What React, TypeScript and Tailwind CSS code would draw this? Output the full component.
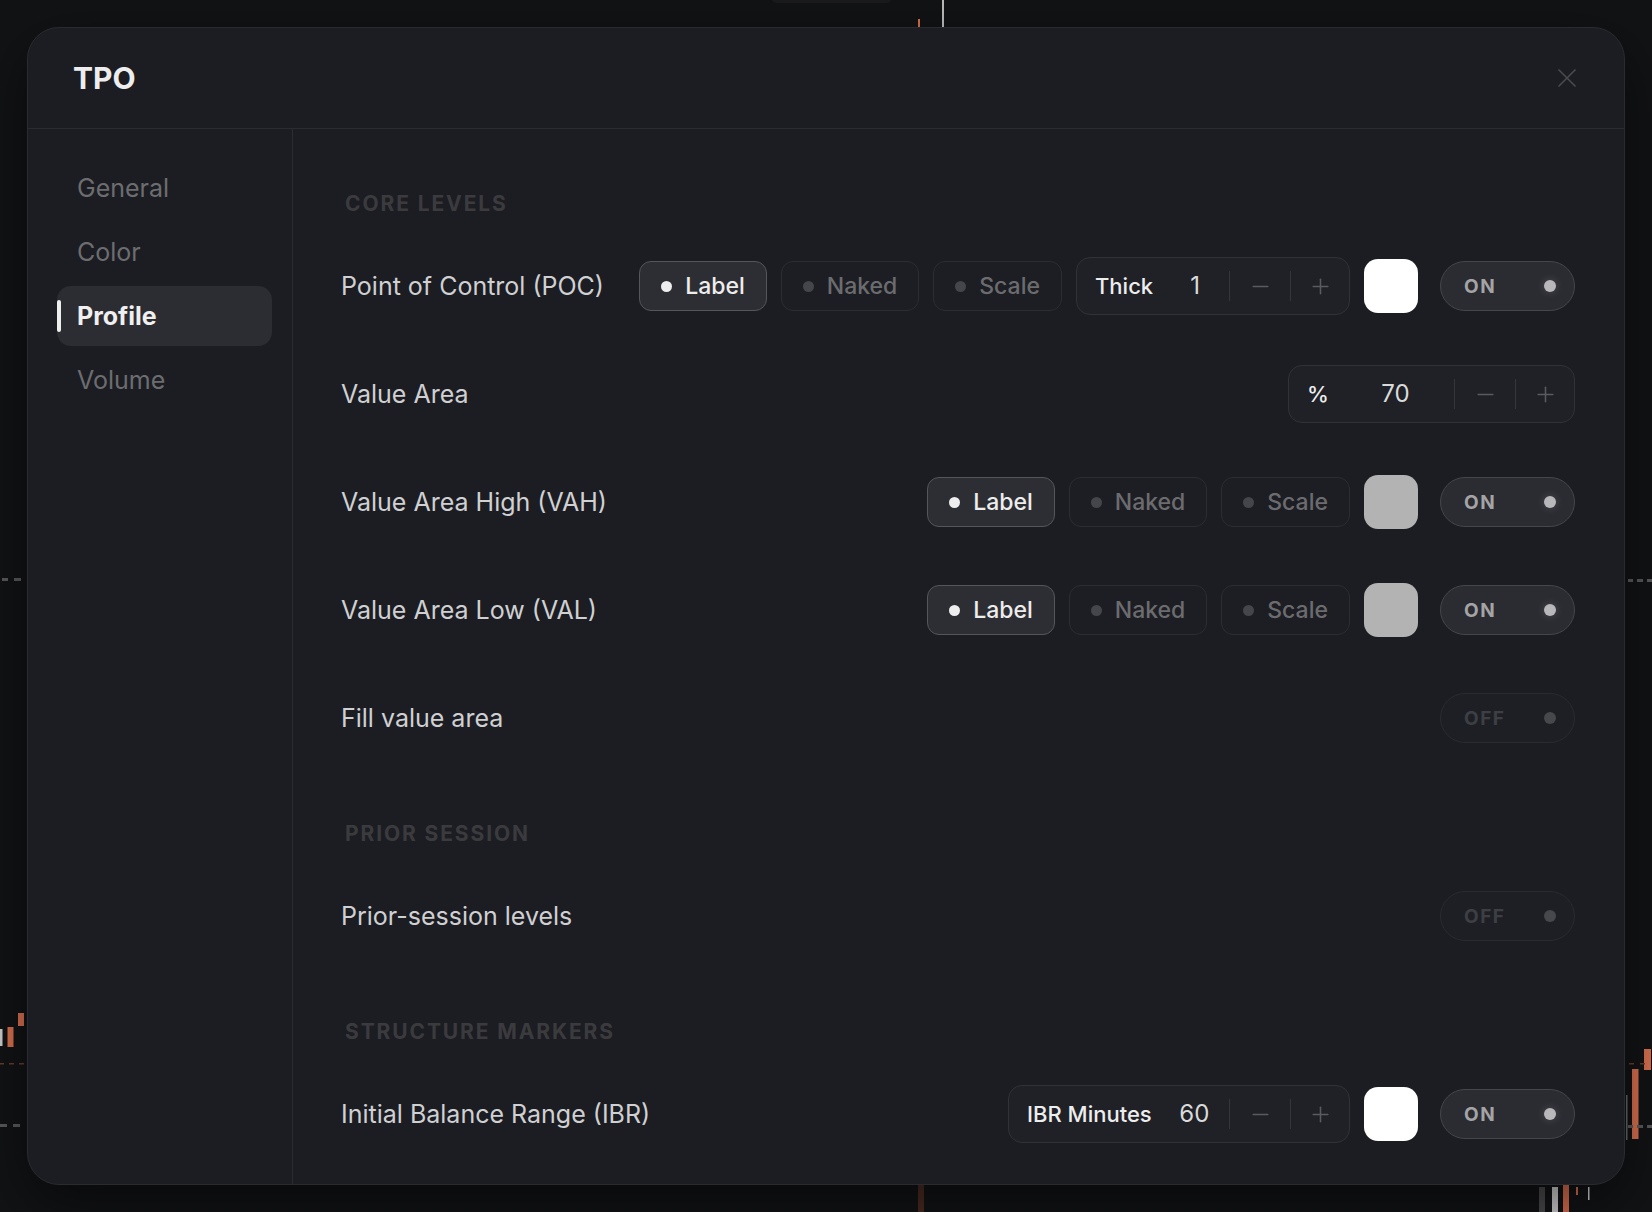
import React from "react";
import { Minus, Plus, X } from "lucide-react";

const FONT = { fontFamily: "Inter, 'Noto Sans', sans-serif" };

function cx(...a: (string | false | undefined)[]) {
  return a.filter(Boolean).join(" ");
}

function Chip({ label, active }: { label: string; active?: boolean }) {
  return (
    <div
      className={cx(
        "flex h-[50px] items-center gap-[13px] rounded-[12px] border pl-[21px] pr-[21px]",
        active
          ? "border-[#55565c] bg-[#2d2e33] text-[#ededed]"
          : "border-[#2c2d33] bg-[#1c1e24] text-[#6c6c6f]"
      )}
    >
      <span
        className={cx(
          "h-[11px] w-[11px] rounded-full",
          active ? "bg-[#eeeeee]" : "bg-[#45464b]"
        )}
      />
      <span className="text-[23px] font-medium leading-none">{label}</span>
    </div>
  );
}

function Stepper({
  label,
  value,
  widthClass,
}: {
  label: string;
  value: string;
  widthClass: string;
}) {
  return (
    <div
      className={cx(
        "flex h-[58px] items-center rounded-[14px] border border-[#313238] bg-[#1f2127] pl-[18px]",
        widthClass
      )}
    >
      <span className="text-[22px] font-medium leading-none text-[#ededed]">{label}</span>
      <span className="flex-1 pl-2 text-center text-[24px] leading-none text-[#dadada]">
        {value}
      </span>
      <span className="h-[30px] w-px bg-[#35363b]" />
      <span className="flex w-[60px] items-center justify-center text-[#5a5b60]">
        <Minus size={25} strokeWidth={1.5} />
      </span>
      <span className="h-[30px] w-px bg-[#35363b]" />
      <span className="flex w-[58px] items-center justify-center text-[#5a5b60]">
        <Plus size={25} strokeWidth={1.5} />
      </span>
    </div>
  );
}

function Swatch({ color }: { color: string }) {
  return <div className={cx("h-[54px] w-[54px] rounded-[14px]", color)} />;
}

function Toggle({ on }: { on: boolean }) {
  return (
    <div
      className={cx(
        "ml-2 flex h-[50px] w-[135px] items-center justify-between rounded-full border pl-[23px] pr-[18px]",
        on ? "border-[#45464b] bg-[#2b2c31]" : "border-[#2a2b30] bg-[#1d1f25]"
      )}
    >
      <span
        className={cx(
          "text-[19px] font-bold leading-none tracking-[0.08em]",
          on ? "text-[#a4a4a6]" : "text-[#3e3f44]"
        )}
      >
        {on ? "ON" : "OFF"}
      </span>
      <span
        className={cx(
          "h-[12px] w-[12px] rounded-full",
          on ? "bg-[#b8b8ba] shadow-[0_0_8px_rgba(255,255,255,0.18)]" : "bg-[#47484c]"
        )}
      />
    </div>
  );
}

function Row({ label, children }: { label: string; children?: React.ReactNode }) {
  return (
    <div className="flex h-[108px] items-center justify-between">
      <span className="text-[25px] leading-none text-[#d0d0d2]">{label}</span>
      <div className="flex items-center gap-[14px]">{children}</div>
    </div>
  );
}

function Heading({ children }: { children: React.ReactNode }) {
  return (
    <div className="mb-[14px] h-7 pl-1 text-[21px] font-bold uppercase leading-7 tracking-[0.09em] text-[#3b3b3e]">
      {children}
    </div>
  );
}

function ChartBackdrop() {
  return (
    <svg
      className="absolute left-0 top-0"
      width={1652}
      height={1212}
      viewBox="0 0 1652 1212"
    >
      {/* top */}
      <rect x={771} y={-12} width={121} height={15} rx={6} fill="#1b1b1d" />
      <rect x={918} y={19} width={2} height={8} fill="#d96f4e" />
      <rect x={942} y={0} width={2} height={27} fill="#bdbdbd" />
      {/* left */}
      <rect x={2} y={578} width={6} height={3} fill="#5a5a5c" />
      <rect x={14} y={578} width={7} height={3} fill="#5a5a5c" />
      <rect x={18} y={1013} width={6} height={13} fill="#d9704f" />
      <rect x={7.5} y={1027} width={6} height={20} fill="#d9704f" />
      <rect x={0} y={1029} width={2.5} height={17} fill="#cfcfcf" />
      <rect x={0} y={1063} width={4} height={1.5} fill="#6b3a2c" />
      <rect x={9} y={1063} width={5} height={1.5} fill="#6b3a2c" />
      <rect x={19} y={1063} width={5} height={1.5} fill="#6b3a2c" />
      <rect x={0} y={1124} width={7} height={3} fill="#5a5a5c" />
      <rect x={13} y={1124} width={7} height={3} fill="#5a5a5c" />
      {/* right */}
      <rect x={1628} y={579} width={5} height={3} fill="#5a5a5c" />
      <rect x={1637} y={579} width={6} height={3} fill="#5a5a5c" />
      <rect x={1647} y={579} width={5} height={3} fill="#5a5a5c" />
      <rect x={1644} y={1049} width={7} height={21} fill="#d9704f" />
      <rect x={1632} y={1069} width={6.5} height={70} fill="#d9704f" />
      <rect x={1629} y={1063} width={5} height={1.5} fill="#6b3a2c" />
      <rect x={1640} y={1063} width={5} height={1.5} fill="#6b3a2c" />
      <rect x={1628} y={1125} width={5} height={3} fill="#5a5a5c" />
      <rect x={1637} y={1125} width={6} height={3} fill="#5a5a5c" />
      <rect x={1647} y={1125} width={5} height={3} fill="#5a5a5c" />
      <rect x={1626} y={1095} width={1.5} height={45} fill="#6a6a6c" />
      {/* bottom */}
      <rect x={918} y={1185} width={6} height={27} fill="#4a2b22" />
      <rect x={1539} y={1187} width={6} height={25} fill="#4a4a4c" />
      <rect x={1552} y={1187} width={6} height={25} fill="#d0d0d0" />
      <rect x={1563} y={1185} width={6} height={27} fill="#d96f4e" />
      <rect x={1576} y={1187} width={2} height={8} fill="#d96f4e" />
      <rect x={1588} y={1187} width={1.5} height={13} fill="#d0d0d0" />
    </svg>
  );
}

export default function App() {
  const nav = ["General", "Color", "Profile", "Volume"];
  return (
    <div
      className="relative h-[1212px] w-full overflow-hidden bg-[#121315] p-[27px]"
      style={FONT}
    >
      <ChartBackdrop />
      <div className="relative flex h-full flex-col overflow-hidden rounded-[32px] border border-[#2a2b2f] bg-[#1b1d23] shadow-[0_20px_60px_rgba(0,0,0,0.5)]">
        {/* header */}
        <div className="flex h-[101px] shrink-0 items-center justify-between border-b border-[#2a2c31] pl-[45px] pr-[41px]">
          <span className="text-[30px] font-bold leading-none text-[#ededed]">TPO</span>
          <X size={32} strokeWidth={1.25} className="text-[#4b4b4e]" />
        </div>
        {/* body */}
        <div className="flex min-h-0 flex-1">
          <div className="flex w-[265px] shrink-0 flex-col gap-1 border-r border-[#2a2c31] pl-[29px] pr-[20px] pt-[29px]">
            {nav.map((n) => {
              const active = n === "Profile";
              return (
                <div
                  key={n}
                  className={cx(
                    "relative flex h-[60px] items-center rounded-[14px] pl-5 text-[25px] leading-none",
                    active ? "bg-[#2c2d32] font-bold text-[#f0f0f0]" : "text-[#6d6d70]"
                  )}
                >
                  {active && (
                    <span className="absolute left-0 top-[14px] h-[32px] w-[4px] rounded-full bg-[#ededed]" />
                  )}
                  {n}
                </div>
              );
            })}
          </div>
          <div className="flex min-w-0 flex-1 flex-col gap-[48px] overflow-hidden pl-12 pr-[49px] pt-[61px]">
            <section>
              <Heading>Core Levels</Heading>
              <Row label="Point of Control (POC)">
                <Chip label="Label" active />
                <Chip label="Naked" />
                <Chip label="Scale" />
                <Stepper label="Thick" value="1" widthClass="w-[274px]" />
                <Swatch color="bg-white" />
                <Toggle on />
              </Row>
              <Row label="Value Area">
                <Stepper label="%" value="70" widthClass="w-[287px]" />
              </Row>
              <Row label="Value Area High (VAH)">
                <Chip label="Label" active />
                <Chip label="Naked" />
                <Chip label="Scale" />
                <Swatch color="bg-[#b3b3b3]" />
                <Toggle on />
              </Row>
              <Row label="Value Area Low (VAL)">
                <Chip label="Label" active />
                <Chip label="Naked" />
                <Chip label="Scale" />
                <Swatch color="bg-[#b3b3b3]" />
                <Toggle on />
              </Row>
              <Row label="Fill value area">
                <Toggle on={false} />
              </Row>
            </section>
            <section>
              <Heading>Prior Session</Heading>
              <Row label="Prior-session levels">
                <Toggle on={false} />
              </Row>
            </section>
            <section>
              <Heading>Structure Markers</Heading>
              <Row label="Initial Balance Range (IBR)">
                <Stepper label="IBR Minutes" value="60" widthClass="w-[342px]" />
                <Swatch color="bg-white" />
                <Toggle on />
              </Row>
            </section>
          </div>
        </div>
      </div>
    </div>
  );
}
